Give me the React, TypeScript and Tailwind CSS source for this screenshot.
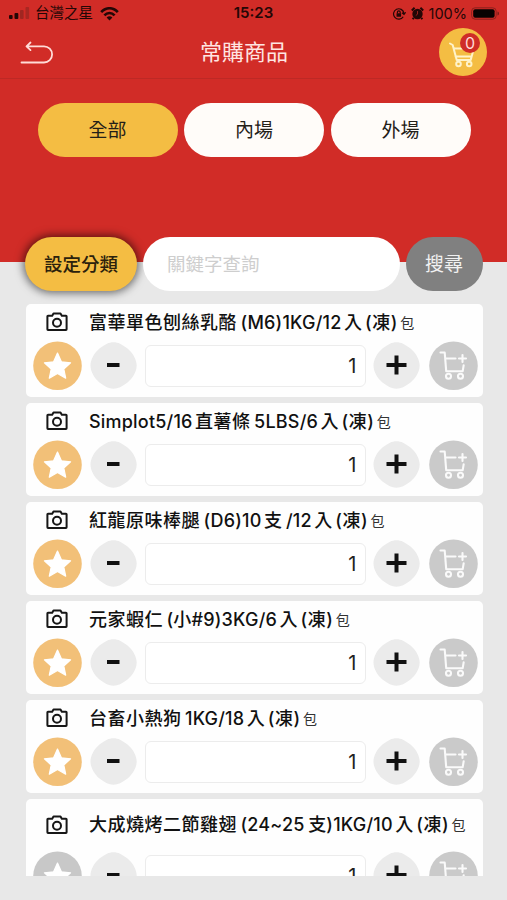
import React from "react";

type Product = { parts: string[]; starred: boolean; tall?: boolean };

const products: Product[] = [
  { parts: ["富華單色刨絲乳酪", "(M6)1KG/12", "入", "(凍)"], starred: true },
  { parts: ["Simplot5/16", "直薯條", "5LBS/6", "入", "(凍)"], starred: true },
  { parts: ["紅龍原味棒腿", "(D6)10", "支", "/12", "入", "(凍)"], starred: true },
  { parts: ["元家蝦仁", "(小#9)3KG/6", "入", "(凍)"], starred: true },
  { parts: ["台畜小熱狗", "1KG/18", "入", "(凍)"], starred: true },
  { parts: ["大成燒烤二節雞翅", "(24~25", "支)1KG/10", "入", "(凍)"], starred: false, tall: true },
];

function StatusBar() {
  return (
    <div className="relative flex h-[27px] items-center justify-between pl-[9px] pr-[6px] text-[#240706]">
      <div className="flex items-center">
        <svg width="21" height="13" viewBox="0 0 21 13">
          <rect x="0" y="8" width="3.6" height="4" rx="1" fill="#240706" />
          <rect x="5.5" y="6" width="3.8" height="6" rx="1" fill="#240706" />
          <rect x="11" y="3" width="3.6" height="9" rx="1" fill="#a02621" />
          <rect x="16.5" y="0" width="3.6" height="12" rx="1" fill="#a82722" />
        </svg>
        <span className="ml-[5px] text-[14.5px] leading-none">台灣之星</span>
        <svg className="ml-[7px]" width="19" height="14" viewBox="0 0 19 14" fill="none" stroke="#240706" strokeWidth="2.6">
          <path d="M1.2 5.2C6-.1 13-.1 17.8 5.2M4.4 8.4C7.4 5.1 11.6 5.1 14.6 8.4" />
          <path d="M9.5 13.5 6.6 10.4Q9.5 8.2 12.4 10.4Z" fill="#240706" stroke="none" />
        </svg>
      </div>
      <span className="absolute inset-x-0 text-center text-[15px] font-semibold">15:23</span>
      <div className="flex items-center">
        <svg width="14" height="14" viewBox="0 0 14 14" fill="none" stroke="#240706" strokeWidth="1.2">
          <path d="M11.2 9.7A5.2 5.2 0 1 1 11.9 6.2M10 5.8l2 1.5 1.6-2" />
          <rect x="4.5" y="6.3" width="4.6" height="3.5" rx=".5" fill="#240706" stroke="none" />
          <path d="M5.4 6.4V5.2a1.4 1.4 0 0 1 2.8 0v1.2" />
        </svg>
        <svg className="ml-[5px]" width="13" height="13" viewBox="0 0 13 13">
          <circle cx="6.5" cy="7" r="5.2" fill="#240706" />
          <path d="M.8 3.5 3.6.8M12.2 3.5 9.4.8M2.8 10.8l-1.2 1.4M10.2 10.8l1.2 1.4" stroke="#240706" strokeWidth="2" />
          <path d="M6.5 4v3.2L4.8 8.5" fill="none" stroke="#b32822" strokeWidth=".8" />
        </svg>
        <span className="ml-[5px] text-[14.5px]">100%</span>
        <svg className="ml-[4px]" width="30" height="13" viewBox="0 0 30 13">
          <rect x=".6" y=".8" width="24.6" height="11.4" rx="3.5" fill="none" stroke="#8b211d" />
          <rect x="2.2" y="2.3" width="21.4" height="8.4" rx="2" fill="#080202" />
          <path d="M26.5 4.5c2 .4 2 3.6 0 4z" fill="#791b18" />
        </svg>
      </div>
    </div>
  );
}

function Header() {
  return (
    <div className="flex h-[52px] items-center border-b border-[#bd2925] pl-[20px] pr-[20px]">
      <svg className="mt-[1px]" width="34" height="24" viewBox="0 0 34 24" fill="none" stroke="#ffdcd8" strokeWidth="1.8" strokeLinecap="round" strokeLinejoin="round">
        <path d="M10.5 1.5 6.5 5.3l4 3.8M6.8 5.3H24a8 8 0 0 1 0 16.2H1.5" />
      </svg>
      <h1 className="-mt-px ml-[146px] text-[22px] leading-none text-[#ffe5e2]">常購商品</h1>
      <button className="relative -mt-px ml-auto flex size-12 items-center justify-center rounded-full bg-[#f4bd43]">
        <svg width="48" height="48" viewBox="0 0 48 48" fill="none" stroke="#fff3c9" strokeWidth="2" strokeLinecap="round" strokeLinejoin="round">
          <path d="M11 15.5 13.7 17l4 15h14l3-11M15.5 20.5H29M16.5 28.5h15" />
          <circle cx="19.5" cy="36" r="2.3" />
          <circle cx="30.2" cy="36" r="2.3" />
        </svg>
        <span className="absolute left-[21px] top-[5px] flex size-5 items-center justify-center rounded-full bg-[#cf2d27] text-[16px] leading-none text-[#ffd9d6]">0</span>
      </button>
    </div>
  );
}

function CameraIcon() {
  return (
    <svg className="-mt-px shrink-0" width="22" height="20" viewBox="0 0 22 20" fill="none" stroke="#171717" strokeWidth="2" strokeLinejoin="round">
      <path d="M2 3.7h4.2L7.5 1.4h7l1.3 2.3H20a.6.6 0 0 1 .6.6v13a.6.6 0 0 1-.6.6H2a.6.6 0 0 1-.6-.6v-13a.6.6 0 0 1 .6-.6Z" />
      <circle cx="11" cy="10.7" r="4" />
    </svg>
  );
}

function RoundedDiamond({ children }: { children: React.ReactNode }) {
  return (
    <svg className="shrink-0" width="48" height="48" viewBox="0 0 48 48">
      <path d="M23.5 1.3c5 0 8 2 14 6.2 5 4 9.2 11 9.2 17s-4.2 13-9.2 17c-6 4.2-9 6.2-14 6.2s-8-2-14-6.2C4.5 37.5.5 30.5.5 24.5s4-13 9-17c6-4.2 9-6.2 14-6.2Z" fill="#ebebeb" />
      {children}
    </svg>
  );
}

function ProductCard({ product }: { product: Product }) {
  return (
    <article className="shrink-0 rounded-[5px] bg-[#fefefe]">
      <div className={`flex items-center pl-5 ${product.tall ? "h-[52px]" : "h-[37px]"}`}>
        <CameraIcon />
        <h2 className="ml-[21px] flex items-baseline gap-[3.5px] whitespace-nowrap text-[18px] font-medium leading-none tracking-[0.5px] text-[#111]">
          {product.parts.map((part, i) => (
            <span key={i} className={/[0-9]/.test(part) ? "font-[550] tracking-[0.2px]" : i === 0 ? "" : "-ml-px"}>{part}</span>
          ))}
          <span className="relative -top-px -ml-px text-[14px] font-normal tracking-normal text-[#333]">包</span>
        </h2>
      </div>
      <div className="flex h-[56px] items-start pl-[6.5px] pr-[5px]">
        <svg className="shrink-0" width="49" height="49" viewBox="0 0 49 49">
          <circle cx="24.5" cy="24.7" r="24.3" fill={product.starred ? "#f2c078" : "#c8c8c8"} />
          <path d="m24.5 12 3.9 8.800 9.200 1-6.800 6.200 1.900 9.200-8.200-4.700-8.200 4.700 1.900-9.200-6.800-6.200 9.200-1z" fill="#fff" stroke="#fff" strokeWidth="1.2" strokeLinejoin="round" />
        </svg>
        <div className="ml-[8px] flex">
          <RoundedDiamond>
            <path d="M17 24h12.5" stroke="#111" strokeWidth="4" />
          </RoundedDiamond>
        </div>
        <div className="ml-[7px] mt-[4px] flex h-[42px] w-[221px] items-center justify-end rounded-[6px] border border-[#ececec] bg-white pr-[8px] text-[20px] text-[#222]">1</div>
        <div className="ml-[7.5px] flex">
          <RoundedDiamond>
            <path d="M13.500 24h20M23.500 14.500v19" stroke="#111" strokeWidth="4" />
          </RoundedDiamond>
        </div>
        <svg className="ml-[7.5px] shrink-0" width="49" height="49" viewBox="0 0 49 49" fill="none" stroke="#fafafa" strokeWidth="2.1" strokeLinecap="round" strokeLinejoin="round">
          <circle cx="24.5" cy="24.7" r="24.3" fill="#cacaca" stroke="none" />
          <path d="M11.5 11.5h4.2l1.5 18.7h16.5l1-6M17 17.500h9.500M33.500 14v7M30 17.500h7" />
          <circle cx="19.5" cy="35.3" r="2.5" />
          <circle cx="31.5" cy="35.3" r="2.5" />
        </svg>
      </div>
    </article>
  );
}

export default function App() {
  return (
    <main className="h-[900px] w-full overflow-hidden bg-[#e8e8e8] font-['Inter','Noto_Sans_CJK_TC',sans-serif]">
      <section className="h-[262px] bg-[#d12c27]">
        <StatusBar />
        <Header />
        <nav className="mt-[24px] flex gap-[6.5px] pl-[37.5px] text-[19px] leading-none text-[#242018]">
          <button className="h-[54px] w-[140px] rounded-[27px] bg-[#f4bd43]">全部</button>
          <button className="h-[54px] w-[140px] rounded-[27px] bg-[#fffcf9]">內場</button>
          <button className="h-[54px] w-[140px] rounded-[27px] bg-[#fffcf9]">外場</button>
        </nav>
      </section>
      <div className="relative -mt-[25px] flex gap-[6px] pl-[25px] text-[18.5px] leading-none">
        <button className="h-[54px] w-[112px] rounded-[27px] bg-[#f4bd43] font-medium text-[#2b210c] shadow-[0_0_8px_2px_rgba(0,0,0,0.55)]">設定分類</button>
        <div className="flex h-[54px] w-[256.5px] items-center rounded-[27px] bg-white pl-[24px] text-[#cecece]">關鍵字查詢</div>
        <button className="h-[54px] w-[77px] rounded-[27px] bg-[#808080] text-[19px] text-[#f1f1f1]">搜尋</button>
      </div>
      <section className="ml-[26px] mt-[13px] flex h-[572px] w-[457px] flex-col gap-[6px] overflow-hidden">
        {products.map((product, i) => (
          <ProductCard key={i} product={product} />
        ))}
      </section>
    </main>
  );
}
